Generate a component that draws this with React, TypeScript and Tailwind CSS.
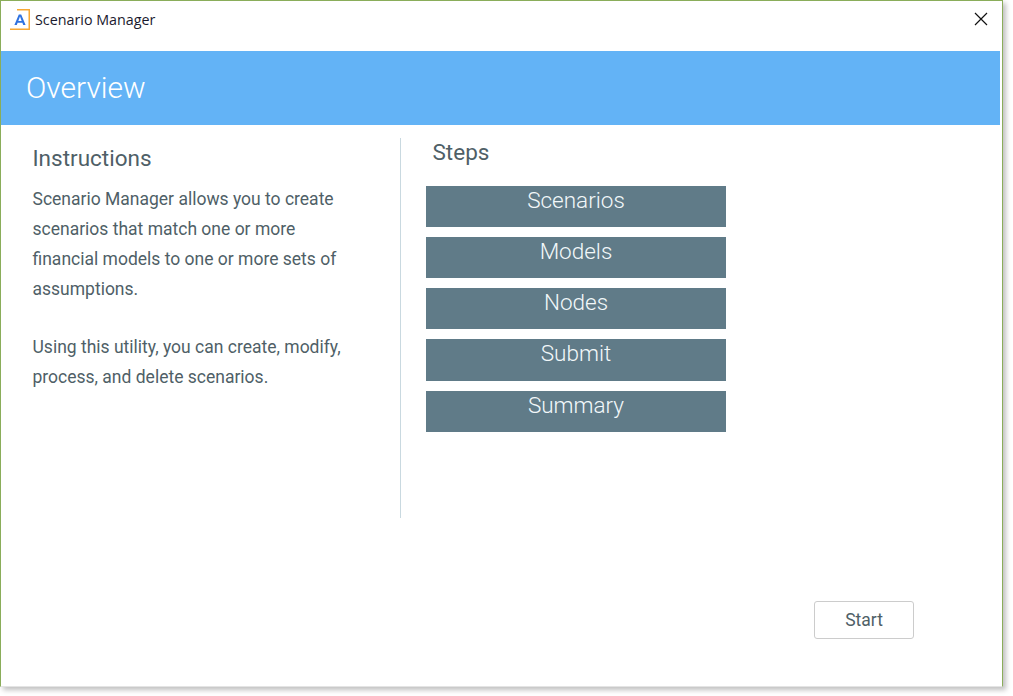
const steps = ['Scenarios', 'Models', 'Nodes', 'Submit', 'Summary'];

function AppLogo() {
	return (
		<svg width="20" height="21" viewBox="0 0 20 21" className="shrink-0">
			<path d="M7 0 H20 V21 H0 V19.5 H18.5 V1.5 H7 Z" fill="#f7a833" />
			<path d="M4.4 16 L8.8 5.5 H11.2 L15.6 16 H13.2 L12.4 13.8 H7.6 L6.8 16 Z M8.3 12 H11.7 L10 7.6 Z" fill="#2f72e0" fillRule="evenodd" />
		</svg>
	);
}

export default function App() {
	return (
		<div className="w-[1013px] h-[696px] bg-white font-['Roboto',sans-serif] overflow-hidden">
			<div className="w-[1003px] h-[687px] flex flex-col bg-white border border-[#8aad5a] border-b-[#e4e4e4] shadow-[3px_3px_5px_rgba(0,0,0,0.25)]">
				<div className="h-[50px] shrink-0 flex items-center pl-[9px] pr-[14px] pb-[13px]">
					<AppLogo />
					<span className="ml-[5px] text-[14.3px] leading-[20px] text-[#1a1a2e] font-['Open_Sans',sans-serif]">Scenario Manager</span>
					<svg width="14" height="14" viewBox="0 0 14 14" className="ml-auto mb-[1px]" stroke="#111" strokeWidth="1.2" fill="none">
						<path d="M1 1 L13 13 M13 1 L1 13" />
					</svg>
				</div>
				<div className="h-[74px] shrink-0 bg-[#63b3f6] mr-[2px] flex items-center pl-[25px] pb-[2px]">
					<h1 className="text-[30px] font-light text-white">Overview</h1>
				</div>
				<div className="flex pt-[13px]">
					<div className="w-[400px] h-[380px] shrink-0 border-r border-[#c9d9e0] pl-[31.5px] pr-[50px] text-[#4f5f67]">
						<h2 className="text-[22.5px] leading-[28px] mt-[6px] mb-[12px]">Instructions</h2>
						<p className="text-[17.5px] leading-[30px]">
							Scenario Manager allows you to create scenarios that match one or more financial models to one or more sets of assumptions.
						</p>
						<p className="text-[17.5px] leading-[30px] mt-[28px]">
							Using this utility, you can create, modify, process, and delete scenarios.
						</p>
					</div>
					<div className="pl-[25px]">
						<h2 className="text-[22.5px] leading-[28px] text-[#4f5f67] pl-[6.5px] mb-[20px]">Steps</h2>
						<div className="flex flex-col gap-[10px]">
							{steps.map((s) => (
								<div key={s} className={`w-[300px] ${s === 'Submit' ? 'h-[42px]' : 'h-[41px]'} bg-[#607b88] text-center text-[22.5px] font-light leading-[28px] text-[#f2f8fa]`}>
									{s}
								</div>
							))}
						</div>
					</div>
				</div>
				<div className="flex justify-end pr-[88px] mt-[83px]">
					<button className="w-[100px] h-[38px] rounded-[3px] border border-[#ccc] bg-white text-[#4f5f67] text-[17.5px] pt-[1px]">Start</button>
				</div>
			</div>
		</div>
	);
}
